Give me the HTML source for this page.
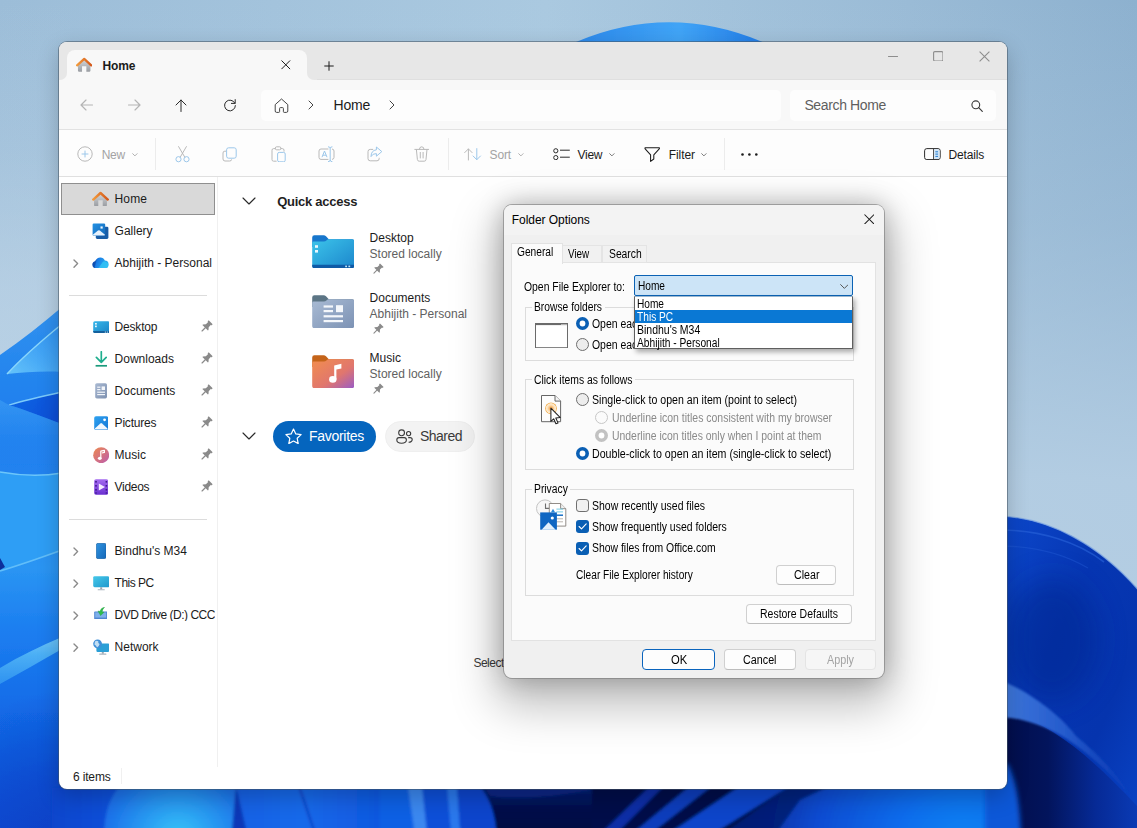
<!DOCTYPE html>
<html lang="en">
<head>
<meta charset="utf-8">
<title>Home - File Explorer</title>
<style>
*{box-sizing:border-box;margin:0;padding:0}
html,body{width:1137px;height:828px;overflow:hidden}
body{position:relative;font-family:"Liberation Sans",sans-serif;font-size:12px;color:#1b1b1b;background:#9dbdd7}
.abs{position:absolute}
#wall{position:absolute;left:0;top:0;width:1137px;height:828px}
.t{position:absolute;white-space:nowrap;line-height:1}
.d{transform:scaleX(.875);transform-origin:0 50%}
</style>
</head>
<body>
<svg id="wall" viewBox="0 0 1137 828">
<defs>
<linearGradient id="sky" x1="0" y1="0" x2="1" y2="0">
<stop offset="0" stop-color="#9cbdd8"/><stop offset="0.48" stop-color="#aac9e0"/><stop offset="0.8" stop-color="#9abbd6"/><stop offset="1" stop-color="#8db1cf"/>
</linearGradient>
<linearGradient id="skyv" x1="0" y1="0" x2="0" y2="1">
<stop offset="0" stop-color="#b6cfe4" stop-opacity="0"/><stop offset="0.27" stop-color="#b6cfe4" stop-opacity="0.3"/><stop offset="0.37" stop-color="#b6cfe4" stop-opacity="0.48"/><stop offset="0.58" stop-color="#b6cfe4" stop-opacity="0.9"/><stop offset="1" stop-color="#b6cfe4" stop-opacity="1"/>
</linearGradient>
<linearGradient id="arc" x1="0" y1="0" x2="1" y2="0">
<stop offset="0" stop-color="#2a86ea"/><stop offset="0.55" stop-color="#40a4f6"/><stop offset="1" stop-color="#1f78e6"/>
</linearGradient>
<linearGradient id="lp" x1="0" y1="0" x2="0" y2="1">
<stop offset="0" stop-color="#3292ef"/><stop offset="0.12" stop-color="#2586ee"/><stop offset="0.25" stop-color="#1d7cee"/><stop offset="0.5" stop-color="#2a95f3"/><stop offset="0.62" stop-color="#1c7ef0"/><stop offset="0.75" stop-color="#146ee9"/><stop offset="1" stop-color="#0a4ad3"/>
</linearGradient>
<radialGradient id="lpd" cx="66" cy="815" r="125" gradientUnits="userSpaceOnUse"><stop offset="0" stop-color="#0a3cc0" stop-opacity=".65"/><stop offset="1" stop-color="#0a3cc0" stop-opacity="0"/></radialGradient>
<linearGradient id="rp" x1="0" y1="0" x2="1" y2="1">
<stop offset="0" stop-color="#0c48cc"/><stop offset="0.4" stop-color="#0636b2"/><stop offset="0.7" stop-color="#0534ae"/><stop offset="1" stop-color="#0a44c6"/>
</linearGradient>
<linearGradient id="rp2" x1="1000" y1="0" x2="1137" y2="0" gradientUnits="userSpaceOnUse">
<stop offset="0" stop-color="#020d4a"/><stop offset="0.35" stop-color="#02145c"/><stop offset="0.7" stop-color="#062a96"/><stop offset="1" stop-color="#0a3ab4"/>
</linearGradient>
<linearGradient id="ba" x1="0" y1="0" x2="1" y2="0"><stop offset="0" stop-color="#0a45cc"/><stop offset="1" stop-color="#0d52dc"/></linearGradient>
<radialGradient id="bb" cx="178" cy="840" r="95" gradientUnits="userSpaceOnUse"><stop offset="0" stop-color="#38c8f7"/><stop offset="0.35" stop-color="#2a9ff3"/><stop offset="0.75" stop-color="#1c74ea"/><stop offset="1" stop-color="#1866e4"/></radialGradient>
<linearGradient id="bd" x1="0" y1="0" x2="1" y2="0"><stop offset="0" stop-color="#1260e4"/><stop offset="0.45" stop-color="#1769ea"/><stop offset="1" stop-color="#0e56de"/></linearGradient>
<linearGradient id="bh" x1="0" y1="0" x2="0" y2="1"><stop offset="0" stop-color="#061f78"/><stop offset="0.4" stop-color="#020f4c"/><stop offset="1" stop-color="#010a3c"/></linearGradient>
<radialGradient id="bj" cx="965" cy="850" r="230" gradientUnits="userSpaceOnUse"><stop offset="0" stop-color="#1486f4"/><stop offset="0.3" stop-color="#0b6cec"/><stop offset="0.65" stop-color="#0a4cd2"/><stop offset="1" stop-color="#042690"/></radialGradient>
<linearGradient id="bk" x1="0" y1="0" x2="1" y2="0"><stop offset="0" stop-color="#021565"/><stop offset="0.5" stop-color="#03207c"/><stop offset="1" stop-color="#0a3cb8"/></linearGradient>
<filter id="soft" x="-2%" y="-20%" width="104%" height="140%"><feGaussianBlur stdDeviation="1.6"/></filter>
<filter id="soft2" x="-10%" y="-10%" width="120%" height="120%"><feGaussianBlur stdDeviation="2.5"/></filter>
<filter id="soft1" x="-10%" y="-10%" width="120%" height="120%"><feGaussianBlur stdDeviation="0.9"/></filter>
<filter id="soft3" x="-50%" y="-50%" width="200%" height="200%"><feGaussianBlur stdDeviation="14"/></filter>
<linearGradient id="band" x1="0" y1="0" x2="1" y2="0"><stop offset="0" stop-color="#4079dc"/><stop offset="0.5" stop-color="#245acc"/><stop offset="1" stop-color="#1546bc" stop-opacity=".3"/></linearGradient>
<linearGradient id="tg1" x1="0" y1="1" x2="1" y2="0"><stop offset="0" stop-color="#66c4fa"/><stop offset="0.45" stop-color="#46a8f6"/><stop offset="1" stop-color="#2c8ff0"/></linearGradient>
<linearGradient id="tg2" x1="0" y1="0" x2="1" y2="0.4"><stop offset="0" stop-color="#1268e6"/><stop offset="1" stop-color="#0a50d8"/></linearGradient>
<linearGradient id="bnd" x1="0" y1="0" x2="0" y2="1"><stop offset="0" stop-color="#6cc4f8"/><stop offset="0.4" stop-color="#4aaef5"/><stop offset="1" stop-color="#2f92f0"/></linearGradient>
<linearGradient id="fade" x1="0" y1="400" x2="0" y2="470" gradientUnits="userSpaceOnUse"><stop offset="0" stop-color="#3a9cf4" stop-opacity=".7"/><stop offset="1" stop-color="#2a8cf0" stop-opacity="0"/></linearGradient>
<filter id="soft0" x="-5%" y="-5%" width="110%" height="110%"><feGaussianBlur stdDeviation="0.5"/></filter>
<linearGradient id="skyl" x1="0" y1="0" x2="0" y2="400" gradientUnits="userSpaceOnUse"><stop offset="0" stop-color="#c0d6e8" stop-opacity="0"/><stop offset="0.37" stop-color="#c0d6e8" stop-opacity=".14"/><stop offset="0.72" stop-color="#c0d6e8" stop-opacity=".55"/><stop offset="1" stop-color="#c0d6e8" stop-opacity=".6"/></linearGradient>
</defs>
<rect width="1137" height="828" fill="url(#sky)"/>
<rect width="1137" height="828" fill="url(#skyv)"/>
<rect width="70" height="400" fill="url(#skyl)"/>
<!-- top arc -->
<path d="M566 50 L576 42 Q669 2.6 762.6 42 L772 50 Z" fill="url(#arc)" filter="url(#soft0)"/>
<!-- left bloom -->
<g filter="url(#soft0)">
<path d="M0 355 C22 340,42 324,62 307 L62 828 L0 828 Z" fill="url(#lp)"/>
<path d="M62 324 C40 342,20 360,7 374 C25 372,45 371,62 372 Z" fill="url(#tg1)"/>
<path d="M62 324 C40 342,20 360,7 374" stroke="#8ad6fc" stroke-width="1.5" fill="none"/>
<path d="M62 392 C44 396,26 400,9 405 C26 410,46 418,62 424 Z" fill="url(#tg2)"/>
<path d="M62 392 C44 396,26 400,9 405" stroke="#7ccafa" stroke-width="1.3" fill="none"/>
<path d="M0 400 C4 402,7 404,9 405 C26 410,46 418,62 424 L62 470 L0 470Z" fill="url(#fade)"/>
<path d="M0 472 C22 476,44 476,62 473 L62 551 C40 558,20 565,0 571 Z" fill="#2e9ef5"/>
<path d="M0 472 C22 476,44 476,62 473" stroke="#6cc6fa" stroke-width="1.5" fill="none"/>
<path d="M0 571 C20 565,40 558,62 550" stroke="#62bef9" stroke-width="1.8" fill="none"/>
<path d="M0 558 L5 567 L0 570 Z" fill="#0a2e9c"/>
<path d="M0 668 C20 656,40 646,62 637 L62 649 C42 660,22 672,0 684 Z" fill="url(#bnd)"/>
<rect x="0" y="660" width="62" height="168" fill="url(#lpd)"/>
</g>
<!-- bottom strip -->
<rect x="59" y="784" width="1078" height="44" fill="#0a44cc"/>
<g filter="url(#soft)">
<rect x="52" y="788" width="70" height="56" fill="url(#ba)"/>
<rect x="230" y="786" width="160" height="56" fill="url(#bd)"/>
<path d="M120 786 C108 800,104 815,104 842 L234 842 L238 786 Z" fill="url(#bb)"/>
<path d="M236 786 L249 842 L231 842 Z" fill="#0a38b8"/>
<path d="M299 786 L318 842" stroke="#0a40c4" stroke-width="2.2"/>
<rect x="380" y="786" width="110" height="56" fill="#1160e4"/>
<path d="M408 786 L416 842 L428 842 L422 786Z" fill="#3a88f0"/>
<path d="M422 786 L428 842 L452 842 L448 786Z" fill="#0d50d8"/>
<path d="M447 786 L452 842 L461 842 L457 786Z" fill="#2a78ec"/>
<path d="M457 786 L461 842 L500 842 L486 786Z" fill="#0a44cc"/>
<path d="M480 786 C490 800,496 812,497 842 L600 842 L660 786 Z" fill="url(#bh)"/>
<path d="M490 796 C520 800,560 796,590 790 L590 786 L484 786Z" fill="#0a2c8c" opacity=".8"/>
<rect x="592" y="786" width="420" height="56" fill="#020f4a"/>
<path d="M592 842 L650 786 L664 786 L608 842 Z" fill="#082fa6"/>
<path d="M622 842 L690 786 L712 786 L640 842 Z" fill="#0a3ebc"/>
<path d="M656 842 L740 786 L790 786 L700 842 Z" fill="#0a44ca"/>
<path d="M712 842 L790 786 L1012 786 L1012 842 Z" fill="url(#bj)"/>
<path d="M770 842 L800 800 L830 786 L790 786 L712 842Z" fill="#03186a" opacity=".75"/>
</g>
<!-- right bloom -->
<path d="M1000 516 C1050 518,1100 545,1140 592 L1140 828 L1000 828 Z" fill="url(#rp)"/>
<path d="M1000 516 C1050 518,1100 545,1140 592" stroke="#7fa8e4" stroke-width="1.2" fill="none" opacity=".8"/>
<path d="M1000 530 C1040 530,1078 542,1104 562" stroke="#2a64da" stroke-width="1.6" fill="none" opacity=".6"/>
<path d="M1000 546 C1034 546,1064 554,1088 568" stroke="#1f58d2" stroke-width="1.4" fill="none" opacity=".5"/>
<ellipse cx="1052" cy="640" rx="46" ry="62" fill="#032690" opacity=".55" filter="url(#soft3)"/>
<path d="M1000 712 C1040 716,1085 750,1137 806 L1137 828 L1000 828 Z" fill="url(#rp2)"/>
<path d="M1000 680 C1030 692,1060 715,1076 736 C1096 752,1116 772,1132 798 C1106 768,1082 748,1062 736 C1040 724,1020 718,1000 717 Z" fill="url(#band)" filter="url(#soft1)"/>
<path d="M985 764 L1008 764 C1014 778,1019 792,1021 834 L985 834 Z" fill="#0c58d8" filter="url(#soft2)"/>
</svg>
<div class="abs" style="left:59px;top:42px;width:948px;height:747px;border-radius:8px;background:#fff;box-shadow:0 0 0 1px rgba(70,85,100,.55),0 8px 22px rgba(0,0,0,.22);overflow:hidden"><div class="abs" style="left:0;top:0;width:948px;height:38px;background:#e7e7e7"></div><div class="abs" style="left:0;top:37px;width:948px;height:1px;background:#dfdfdf"></div><div class="abs" style="left:0;top:30px;width:8px;height:8px;background:#f8f8f8"></div><div class="abs" style="left:0;top:22px;width:8px;height:16px;background:#e7e7e7;border-radius:0 0 7px 0"></div><div class="abs" style="left:248px;top:30px;width:8px;height:8px;background:#f8f8f8"></div><div class="abs" style="left:248px;top:22px;width:10px;height:16px;background:#e7e7e7;border-radius:0 0 0 7px"></div><div class="abs" style="left:8px;top:8px;width:240px;height:32px;background:#f8f8f8;border-radius:8px 8px 0 0"></div><div class="abs" style="left:0;top:38px;width:948px;height:50px;background:#f8f8f8;border-bottom:1px solid #e2e2e2"></div><div class="abs" style="left:0;top:88px;width:948px;height:47px;background:#fdfdfd;border-bottom:1px solid #e0e0e0"></div><div class="abs" style="left:202px;top:47.5px;width:520px;height:31px;background:#fdfdfd;border-radius:5px"></div><div class="abs" style="left:731px;top:47.5px;width:206px;height:31px;background:#fdfdfd;border-radius:5px"></div><div class="abs" style="left:157.5px;top:135px;width:1px;height:590px;background:#f0f0f0"></div></div>
<svg class="abs" style="left:75.8px;top:57.4px;" width="16.4" height="15.4" viewBox="0 0 16 15"><defs><linearGradient id="hg1" x1="0" y1="0" x2="0" y2="1"><stop offset="0" stop-color="#d3d6da"/><stop offset="1" stop-color="#9a9da2"/></linearGradient><linearGradient id="hr1" x1="0" y1="0" x2="1" y2="0"><stop offset="0" stop-color="#f29a3c"/><stop offset="1" stop-color="#d4581a"/></linearGradient></defs><path d="M1.9 7.8 L8 2.4 L14.1 7.8 L14.1 13.5 Q14.1 14.3 13.3 14.3 L10.1 14.3 L10.1 8.9 L5.9 8.9 L5.9 14.3 L2.7 14.3 Q1.9 14.3 1.9 13.5 Z" fill="url(#hg1)"/><path d="M1.1 8.1 L8 1.9 L14.9 8.1" fill="none" stroke="url(#hr1)" stroke-width="2.3" stroke-linecap="round" stroke-linejoin="round"/></svg>
<div class="t" style="left:102.6px;top:60.00px;font-size:12px;font-weight:700;letter-spacing:-0.16px;">Home</div>
<svg class="abs" style="left:281.3px;top:60.3px;" width="9.6" height="9.6" viewBox="0 0 9.6 9.6"><path d="M0.5 0.5 L9.1 9.1 M9.1 0.5 L0.5 9.1" stroke="#1b1b1b" stroke-width="1" fill="none"/></svg>
<svg class="abs" style="left:324.4px;top:60.6px;" width="10" height="10" viewBox="0 0 10 10"><path d="M5 0.3 V9.7 M0.3 5 H9.7" stroke="#1b1b1b" stroke-width="1" fill="none"/></svg>
<svg class="abs" style="left:888px;top:56px;" width="10" height="1.2" viewBox="0 0 10 1.2"><rect width="10" height="1.2" fill="#8e8e8e"/></svg>
<svg class="abs" style="left:932.5px;top:50.8px;" width="10.6" height="10.6" viewBox="0 0 10.6 10.6"><rect x="0.6" y="0.6" width="9.4" height="9.4" rx="1.2" fill="none" stroke="#8e8e8e" stroke-width="1.1"/></svg>
<svg class="abs" style="left:978.5px;top:50.8px;" width="11" height="11" viewBox="0 0 11 11"><path d="M0.6 0.6 L10.4 10.4 M10.4 0.6 L0.6 10.4" stroke="#8e8e8e" stroke-width="1.1" fill="none"/></svg>
<svg class="abs" style="left:79.5px;top:98.5px;" width="13" height="12" viewBox="0 0 13 12"><path d="M12.5 6 H1 M6 1 L1 6 L6 11" stroke="#b4b4b4" stroke-width="1.15" fill="none" stroke-linecap="round" stroke-linejoin="round"/></svg>
<svg class="abs" style="left:127.8px;top:98.5px;" width="13" height="12" viewBox="0 0 13 12"><path d="M0.5 6 H12 M7 1 L12 6 L7 11" stroke="#b4b4b4" stroke-width="1.15" fill="none" stroke-linecap="round" stroke-linejoin="round"/></svg>
<svg class="abs" style="left:175.4px;top:98.8px;" width="12" height="13" viewBox="0 0 12 13"><path d="M6 12.5 V1 M1 6 L6 1 L11 6" stroke="#2a2a2a" stroke-width="1" fill="none" stroke-linecap="round" stroke-linejoin="round"/></svg>
<svg class="abs" style="left:223px;top:98px;" width="14" height="14" viewBox="0 0 14 14"><path d="M11.9 5.2 A5.4 5.4 0 1 0 12.4 7.6" stroke="#2a2a2a" stroke-width="1" fill="none" stroke-linecap="round"/><path d="M12.2 1.6 V5.4 H8.4" stroke="#2a2a2a" stroke-width="1" fill="none" stroke-linecap="round" stroke-linejoin="round"/></svg>
<svg class="abs" style="left:273.5px;top:97.8px;" width="15" height="15.4" viewBox="0 0 15 15.4"><path d="M1.2 6.6 L7.5 1 L13.8 6.6 V13 Q13.8 14.4 12.4 14.4 H10.2 Q9.4 14.4 9.4 13.6 V10.4 Q9.4 9.6 8.6 9.6 H6.4 Q5.6 9.6 5.6 10.4 V13.6 Q5.6 14.4 4.8 14.4 H2.6 Q1.2 14.4 1.2 13 Z" fill="none" stroke="#444" stroke-width="1" stroke-linejoin="round"/></svg>
<svg class="abs" style="left:308px;top:100.2px;" width="6" height="10" viewBox="0 0 6 10"><path d="M1 1 L5 5 L1 9" stroke="#444" stroke-width="1" fill="none" stroke-linecap="round" stroke-linejoin="round"/></svg>
<div class="t" style="left:333.6px;top:98.00px;font-size:14px;letter-spacing:-0.19px;">Home</div>
<svg class="abs" style="left:389px;top:100.2px;" width="6" height="10" viewBox="0 0 6 10"><path d="M1 1 L5 5 L1 9" stroke="#444" stroke-width="1" fill="none" stroke-linecap="round" stroke-linejoin="round"/></svg>
<div class="t" style="left:804.4px;top:98.00px;font-size:14px;color:#5f5f5f;letter-spacing:-0.36px;">Search Home</div>
<svg class="abs" style="left:971px;top:99.5px;" width="12" height="12" viewBox="0 0 12 12"><circle cx="4.8" cy="4.8" r="3.9" fill="none" stroke="#3a3a3a" stroke-width="1.1"/><path d="M7.7 7.7 L11.3 11.3" stroke="#3a3a3a" stroke-width="1.2" stroke-linecap="round"/></svg>
<svg class="abs" style="left:76.5px;top:146px;" width="16" height="16" viewBox="0 0 16 16"><circle cx="8" cy="8" r="7.2" fill="none" stroke="#b9b9b9" stroke-width="1"/><path d="M8 4.6 V11.4 M4.6 8 H11.4" stroke="#9cc7ea" stroke-width="1" fill="none"/></svg>
<div class="t" style="left:101.7px;top:148.70px;font-size:12px;color:#a3a3a3;letter-spacing:-0.24px;">New</div>
<svg class="abs" style="left:132.4px;top:152.6px;" width="5.8" height="3.6" viewBox="0 0 5.8 3.6"><path d="M0.7 0.7 L2.9 2.9 L5.1 0.7" stroke="#b0b0b0" stroke-width="1" fill="none" stroke-linecap="round" stroke-linejoin="round"/></svg>
<div class="abs" style="left:155px;top:138px;width:1px;height:32px;background:#ececec"></div>
<svg class="abs" style="left:174.5px;top:146px;" width="15" height="16.5" viewBox="0 0 15 16.5"><path d="M3.6 0.6 L9.8 11.2 M11.4 0.6 L5.2 11.2" stroke="#b9b9b9" stroke-width="1" fill="none" stroke-linecap="round"/><circle cx="3.5" cy="13.2" r="2.6" fill="none" stroke="#9cc7ea" stroke-width="1"/><circle cx="11.5" cy="13.2" r="2.6" fill="none" stroke="#9cc7ea" stroke-width="1"/></svg>
<svg class="abs" style="left:222.2px;top:146.5px;" width="15" height="15" viewBox="0 0 15 15"><path d="M4 4.2 H2.8 Q1 4.2 1 6 V12 Q1 14 3 14 H7.6 Q9.6 14 9.6 12.4" fill="none" stroke="#b9b9b9" stroke-width="1"/><rect x="4.6" y="0.8" width="9.6" height="10.4" rx="2" fill="none" stroke="#9cc7ea" stroke-width="1"/></svg>
<svg class="abs" style="left:270.5px;top:145.8px;" width="15" height="16.5" viewBox="0 0 15 16.5"><path d="M4.6 2.6 H2.6 Q1 2.6 1 4.2 V13.6 Q1 15.2 2.6 15.2 H5.6 M9.6 2.6 H11.4 Q13 2.6 13 4.2 V5.6" fill="none" stroke="#b9b9b9" stroke-width="1"/><rect x="4.4" y="0.8" width="5.4" height="3" rx="1.2" fill="none" stroke="#b9b9b9" stroke-width="1"/><rect x="6.6" y="6.4" width="7.6" height="9.4" rx="1.6" fill="none" stroke="#9cc7ea" stroke-width="1"/></svg>
<svg class="abs" style="left:317.8px;top:145.8px;" width="17" height="16.5" viewBox="0 0 17 16.5"><path d="M10.4 3 H3 Q1 3 1 5 V11.4 Q1 13.4 3 13.4 H10.4 M14 3 Q16 3.2 16 5 V11.4 Q16 13.2 14 13.4" fill="none" stroke="#b9b9b9" stroke-width="1"/><path d="M10 0.8 Q12.2 0.8 12.2 2.4 V14 Q12.2 15.7 10 15.7 M14.4 0.8 Q12.2 0.8 12.2 2.4 M14.4 15.7 Q12.2 15.7 12.2 14" fill="none" stroke="#9cc7ea" stroke-width="1"/><path d="M4 11.2 L6.5 5 L9 11.2 M4.9 9.2 H8.1" fill="none" stroke="#9cc7ea" stroke-width="1" stroke-linejoin="round"/></svg>
<svg class="abs" style="left:366.6px;top:146px;" width="16" height="16" viewBox="0 0 16 16"><path d="M6.2 3.4 H3.2 Q1 3.4 1 5.6 V12.6 Q1 14.8 3.2 14.8 H10 Q12.2 14.8 12.2 12.6 V11.8" fill="none" stroke="#b9b9b9" stroke-width="1"/><path d="M9.4 1 L14.8 5.6 L9.4 10.2 V7.6 Q5.6 7.4 4 10.6 Q4.2 4.4 9.4 3.8 Z" fill="none" stroke="#9cc7ea" stroke-width="1" stroke-linejoin="round"/></svg>
<svg class="abs" style="left:414.3px;top:146px;" width="15.4" height="16" viewBox="0 0 15.4 16"><path d="M0.8 3.4 H14.6 M5.4 3.2 Q5.4 0.8 7.7 0.8 Q10 0.8 10 3.2 M2.4 3.6 L3.4 13.6 Q3.6 15.2 5.2 15.2 H10.2 Q11.8 15.2 12 13.6 L13 3.6 M6.3 6.4 V12 M9.1 6.4 V12" fill="none" stroke="#b9b9b9" stroke-width="1" stroke-linecap="round"/></svg>
<div class="abs" style="left:448px;top:138px;width:1px;height:32px;background:#ececec"></div>
<svg class="abs" style="left:464.2px;top:148px;" width="17.4" height="12.6" viewBox="0 0 17.4 12.6"><path d="M4.4 12 V1 M0.7 4.6 L4.4 0.9 L8.1 4.6" fill="none" stroke="#b9b9b9" stroke-width="1" stroke-linecap="round" stroke-linejoin="round"/><path d="M12.8 0.6 V11.6 M9.1 8 L12.8 11.7 L16.5 8" fill="none" stroke="#9cc7ea" stroke-width="1" stroke-linecap="round" stroke-linejoin="round"/></svg>
<div class="t" style="left:489.6px;top:148.70px;font-size:12px;color:#a3a3a3;letter-spacing:-0.18px;">Sort</div>
<svg class="abs" style="left:518.3px;top:152.6px;" width="5.8" height="3.6" viewBox="0 0 5.8 3.6"><path d="M0.7 0.7 L2.9 2.9 L5.1 0.7" stroke="#b0b0b0" stroke-width="1" fill="none" stroke-linecap="round" stroke-linejoin="round"/></svg>
<svg class="abs" style="left:552.8px;top:147.6px;" width="17" height="12.4" viewBox="0 0 17 12.4"><circle cx="2.8" cy="2.8" r="2.1" fill="none" stroke="#2a2a2a" stroke-width="1"/><circle cx="2.8" cy="9.6" r="2.1" fill="none" stroke="#2a2a2a" stroke-width="1"/><path d="M7.4 2.2 H16.4 M7.4 9.2 H16.4" stroke="#2a2a2a" stroke-width="1" stroke-linecap="round"/></svg>
<div class="t" style="left:577.6px;top:148.70px;font-size:12px;letter-spacing:-0.3px;">View</div>
<svg class="abs" style="left:609.2px;top:152.6px;" width="5.8" height="3.6" viewBox="0 0 5.8 3.6"><path d="M0.7 0.7 L2.9 2.9 L5.1 0.7" stroke="#7a7a7a" stroke-width="1" fill="none" stroke-linecap="round" stroke-linejoin="round"/></svg>
<svg class="abs" style="left:643.8px;top:146.8px;" width="16.4" height="15.4" viewBox="0 0 16.4 15.4"><path d="M1 0.8 H15.4 Q15.6 1.6 15 2.2 L9.8 7.8 V12 L6.6 14.4 V7.8 L1.4 2.2 Q0.8 1.6 1 0.8 Z" fill="none" stroke="#1b1b1b" stroke-width="1.05" stroke-linejoin="round"/></svg>
<div class="t" style="left:668.7px;top:148.70px;font-size:12px;letter-spacing:-0.06px;">Filter</div>
<svg class="abs" style="left:701.2px;top:152.6px;" width="5.8" height="3.6" viewBox="0 0 5.8 3.6"><path d="M0.7 0.7 L2.9 2.9 L5.1 0.7" stroke="#7a7a7a" stroke-width="1" fill="none" stroke-linecap="round" stroke-linejoin="round"/></svg>
<div class="abs" style="left:724px;top:138px;width:1px;height:32px;background:#ececec"></div>
<svg class="abs" style="left:740.6px;top:153.2px;" width="17" height="3" viewBox="0 0 17 3"><circle cx="1.5" cy="1.5" r="1.3" fill="#1b1b1b"/><circle cx="8.4" cy="1.5" r="1.3" fill="#1b1b1b"/><circle cx="15.3" cy="1.5" r="1.3" fill="#1b1b1b"/></svg>
<svg class="abs" style="left:923.6px;top:148px;" width="17" height="12.4" viewBox="0 0 17 12.4"><rect x="0.6" y="0.6" width="15.6" height="11" rx="2.2" fill="none" stroke="#2a2a2a" stroke-width="1"/><path d="M9.6 0.8 V11.4" stroke="#2a2a2a" stroke-width="0.9"/><path d="M10.2 1.2 H14 Q15.6 1.2 15.6 2.8 V9.4 Q15.6 11 14 11 H10.2 Z" fill="#cfe4f7"/><path d="M11.4 3.8 H14 M11.4 6.1 H14 M11.4 8.4 H14" stroke="#1f7bd0" stroke-width="1"/></svg>
<div class="t" style="left:948.6px;top:148.90px;font-size:12px;letter-spacing:-0.17px;">Details</div>
<div class="abs" style="left:61px;top:183px;width:154px;height:32px;background:#d9d9d9;border:1px solid #8f8f8f"></div>
<svg class="abs" style="left:92.4px;top:191.3px;" width="17" height="15.8" viewBox="0 0 16 15"><defs><linearGradient id="hg2" x1="0" y1="0" x2="0" y2="1"><stop offset="0" stop-color="#d3d6da"/><stop offset="1" stop-color="#9a9da2"/></linearGradient><linearGradient id="hr2" x1="0" y1="0" x2="1" y2="0"><stop offset="0" stop-color="#f29a3c"/><stop offset="1" stop-color="#d4581a"/></linearGradient></defs><path d="M1.9 7.8 L8 2.4 L14.1 7.8 L14.1 13.5 Q14.1 14.3 13.3 14.3 L10.1 14.3 L10.1 8.9 L5.9 8.9 L5.9 14.3 L2.7 14.3 Q1.9 14.3 1.9 13.5 Z" fill="url(#hg2)"/><path d="M1.1 8.1 L8 1.9 L14.9 8.1" fill="none" stroke="url(#hr2)" stroke-width="2.3" stroke-linecap="round" stroke-linejoin="round"/></svg>
<div class="t" style="left:114.6px;top:192.50px;font-size:12px;letter-spacing:0.1px;">Home</div>
<svg class="abs" style="left:92.4px;top:222.6px;" width="17" height="16.4" viewBox="0 0 17 16.4"><defs><linearGradient id="gal" x1="0" y1="0" x2="1" y2="1"><stop offset="0" stop-color="#2492e4"/><stop offset="1" stop-color="#1468b8"/></linearGradient></defs><path d="M3.8 3.7 H15 Q16.4 3.7 16.4 5.1 V14.6 Q16.4 16 15 16 H5.2 Q3.8 16 3.8 14.6 Z" fill="#185ca6"/><rect x="0.6" y="0.5" width="12.6" height="12.3" rx="1.2" fill="url(#gal)"/><path d="M0.8 11.8 L6 7.6 Q6.9 6.9 7.8 7.6 L13 11.8 Q13 12.6 12.2 12.6 H1.6 Q0.8 12.6 0.8 11.8 Z" fill="#e6f1fc"/><rect x="8.5" y="3.4" width="2.2" height="2.2" fill="#eef6fd"/></svg>
<div class="t" style="left:114.6px;top:224.50px;font-size:12px;">Gallery</div>
<svg class="abs" style="left:92.4px;top:256.8px;" width="17" height="11.6" viewBox="0 0 17 11.6"><defs><linearGradient id="od1" x1="0" y1="0" x2="1" y2="0.3"><stop offset="0" stop-color="#0d46ae"/><stop offset="0.4" stop-color="#1a7ee6"/><stop offset="1" stop-color="#2ab2f0"/></linearGradient></defs><path d="M4.2 11.2 Q0.4 11.2 0.4 7.8 Q0.4 4.8 3.2 4.2 Q4.6 0.4 8.4 0.4 Q11.6 0.4 12.8 3.4 Q16.6 3.6 16.6 7.4 Q16.6 11.2 13 11.2 Z" fill="url(#od1)"/><path d="M6.4 11.2 L10.4 5.4 Q12 3.6 13.6 4.8 L16 6.6 Q17.2 11.2 13 11.2Z" fill="#32c2f5" opacity=".85"/><path d="M0.4 7.8 Q0.4 4.8 3.2 4.2 Q3.6 3 4.4 2.2 L3 9.4 Q2.4 11 4.2 11.2 Q0.4 11.2 0.4 7.8Z" fill="#0a3896" opacity=".55"/></svg>
<div class="t" style="left:114.6px;top:256.50px;font-size:12px;">Abhijith - Personal</div>
<svg class="abs" style="left:72.6px;top:258.6px;" width="6" height="9.4" viewBox="0 0 6 9.4"><path d="M1 1 L4.6 4.6 L1 8.2" stroke="#8a8a8a" stroke-width="1.35" fill="none" stroke-linecap="round" stroke-linejoin="round"/></svg>
<div class="abs" style="left:69px;top:295px;width:138px;height:1px;background:#dcdcdc"></div>
<svg class="abs" style="left:92.6px;top:321px;" width="16.6" height="12.2" viewBox="0 0 16.6 12.2"><defs><linearGradient id="dsk" x1="0" y1="0" x2="1" y2="1"><stop offset="0" stop-color="#38b7ea"/><stop offset="1" stop-color="#1b84c6"/></linearGradient></defs><rect x="0.2" y="0.2" width="16.2" height="11.8" rx="1.6" fill="url(#dsk)"/><path d="M0.2 10 H16.4 V10.6 Q16.4 12 15 12 H1.6 Q0.2 12 0.2 10.6 Z" fill="#15609c"/><rect x="2" y="2" width="1.8" height="1.6" fill="#e8f6fd"/><rect x="2" y="4.6" width="1.8" height="1.6" fill="#e8f6fd"/><rect x="11.8" y="10.6" width="1.2" height="1" fill="#bfe4f6"/><rect x="13.8" y="10.6" width="1.2" height="1" fill="#bfe4f6"/></svg>
<div class="t" style="left:114.6px;top:320.50px;font-size:12px;letter-spacing:-0.2px;">Desktop</div>
<svg class="abs" style="left:200.6px;top:321.2px;overflow:visible;" width="11" height="11" viewBox="0 0 11 11"><g transform="rotate(45 5.5 5.5)"><path d="M2.7 -0.4 H8.3 V1.2 H7.5 L7.5 4.4 L9.4 6.6 V7.4 H1.6 V6.6 L3.5 4.4 L3.5 1.2 H2.7 Z" fill="#8a8a8a"/><path d="M5.5 7.2 V11.8" stroke="#8a8a8a" stroke-width="1.2" stroke-linecap="round"/></g></svg>
<svg class="abs" style="left:94.8px;top:351px;" width="12.6" height="16" viewBox="0 0 12.6 16"><path d="M6.3 0.8 V11 M1.4 6.4 L6.3 11.3 L11.2 6.4" fill="none" stroke="#1fae8e" stroke-width="1.7" stroke-linecap="round" stroke-linejoin="round"/><path d="M0.6 14.8 H12" stroke="#1a9a7c" stroke-width="1.7"/></svg>
<div class="t" style="left:114.6px;top:352.50px;font-size:12px;">Downloads</div>
<svg class="abs" style="left:200.6px;top:353.2px;overflow:visible;" width="11" height="11" viewBox="0 0 11 11"><g transform="rotate(45 5.5 5.5)"><path d="M2.7 -0.4 H8.3 V1.2 H7.5 L7.5 4.4 L9.4 6.6 V7.4 H1.6 V6.6 L3.5 4.4 L3.5 1.2 H2.7 Z" fill="#8a8a8a"/><path d="M5.5 7.2 V11.8" stroke="#8a8a8a" stroke-width="1.2" stroke-linecap="round"/></g></svg>
<svg class="abs" style="left:95px;top:383.4px;" width="12.2" height="15.6" viewBox="0 0 12.2 15.6"><defs><linearGradient id="doc" x1="0" y1="0" x2="1" y2="1"><stop offset="0" stop-color="#a9b9d2"/><stop offset="1" stop-color="#7d90b0"/></linearGradient></defs><rect x="0.2" y="0.2" width="11.8" height="15.2" rx="1.6" fill="url(#doc)"/><rect x="2.2" y="3.6" width="3.2" height="1.2" fill="#f3f6fa"/><rect x="2.2" y="6" width="3.2" height="1.2" fill="#f3f6fa"/><rect x="6.6" y="3.4" width="3.4" height="3.6" fill="#f3f6fa"/><rect x="2.2" y="8.6" width="7.8" height="1.2" fill="#f3f6fa"/><rect x="2.2" y="11" width="7.8" height="1.2" fill="#f3f6fa"/></svg>
<div class="t" style="left:114.6px;top:384.50px;font-size:12px;">Documents</div>
<svg class="abs" style="left:200.6px;top:385.2px;overflow:visible;" width="11" height="11" viewBox="0 0 11 11"><g transform="rotate(45 5.5 5.5)"><path d="M2.7 -0.4 H8.3 V1.2 H7.5 L7.5 4.4 L9.4 6.6 V7.4 H1.6 V6.6 L3.5 4.4 L3.5 1.2 H2.7 Z" fill="#8a8a8a"/><path d="M5.5 7.2 V11.8" stroke="#8a8a8a" stroke-width="1.2" stroke-linecap="round"/></g></svg>
<svg class="abs" style="left:94px;top:416px;" width="14.4" height="14.2" viewBox="0 0 14.4 14.2"><defs><linearGradient id="pic" x1="0" y1="0" x2="1" y2="1"><stop offset="0" stop-color="#2ea2f0"/><stop offset="1" stop-color="#1577d6"/></linearGradient></defs><rect x="0.2" y="0.2" width="14" height="13.8" rx="1.8" fill="url(#pic)"/><path d="M0.8 12.6 L6.4 7.4 Q7.2 6.8 8 7.4 L13.6 12.6 Q13.4 13.6 12.4 13.6 H2 Q1 13.6 0.8 12.6Z" fill="#f2f8fe"/><circle cx="10.6" cy="3.8" r="1.4" fill="#fff"/></svg>
<div class="t" style="left:114.6px;top:416.50px;font-size:12px;letter-spacing:-0.2px;">Pictures</div>
<svg class="abs" style="left:200.6px;top:417.2px;overflow:visible;" width="11" height="11" viewBox="0 0 11 11"><g transform="rotate(45 5.5 5.5)"><path d="M2.7 -0.4 H8.3 V1.2 H7.5 L7.5 4.4 L9.4 6.6 V7.4 H1.6 V6.6 L3.5 4.4 L3.5 1.2 H2.7 Z" fill="#8a8a8a"/><path d="M5.5 7.2 V11.8" stroke="#8a8a8a" stroke-width="1.2" stroke-linecap="round"/></g></svg>
<svg class="abs" style="left:92.8px;top:446.8px;" width="16.4" height="16.4" viewBox="0 0 16.4 16.4"><defs><linearGradient id="mus" x1="0" y1="0" x2="1" y2="1"><stop offset="0" stop-color="#ee8a4e"/><stop offset="1" stop-color="#bc5cae"/></linearGradient></defs><circle cx="8.2" cy="8.2" r="8" fill="url(#mus)"/><path d="M7.8 11.2 V4.2 L11.4 3.4 V5.4 L8.9 6" fill="none" stroke="#fff" stroke-width="1.2" stroke-linejoin="round"/><ellipse cx="6.8" cy="11.3" rx="1.9" ry="1.6" fill="#fff"/></svg>
<div class="t" style="left:114.6px;top:448.50px;font-size:12px;">Music</div>
<svg class="abs" style="left:200.6px;top:449.2px;overflow:visible;" width="11" height="11" viewBox="0 0 11 11"><g transform="rotate(45 5.5 5.5)"><path d="M2.7 -0.4 H8.3 V1.2 H7.5 L7.5 4.4 L9.4 6.6 V7.4 H1.6 V6.6 L3.5 4.4 L3.5 1.2 H2.7 Z" fill="#8a8a8a"/><path d="M5.5 7.2 V11.8" stroke="#8a8a8a" stroke-width="1.2" stroke-linecap="round"/></g></svg>
<svg class="abs" style="left:94px;top:479.2px;" width="14.4" height="16" viewBox="0 0 14.4 16"><defs><linearGradient id="vid" x1="0" y1="0" x2="0" y2="1"><stop offset="0" stop-color="#a56cf0"/><stop offset="1" stop-color="#6a2fd0"/></linearGradient></defs><rect x="0.2" y="0.2" width="14" height="15.6" rx="1.8" fill="url(#vid)"/><path d="M4.8 4.4 L11 8 L4.8 11.6 Z" fill="#f4ecff"/><g fill="#3d1a8c"><rect x="1.2" y="2" width="1.6" height="1.6"/><rect x="1.2" y="6" width="1.6" height="1.6"/><rect x="1.2" y="10" width="1.6" height="1.6"/><rect x="1.2" y="13.4" width="1.6" height="1.2"/><rect x="11.6" y="2" width="1.6" height="1.6"/><rect x="11.6" y="6" width="1.6" height="1.6"/><rect x="11.6" y="10" width="1.6" height="1.6"/><rect x="11.6" y="13.4" width="1.6" height="1.2"/></g></svg>
<div class="t" style="left:114.6px;top:480.50px;font-size:12px;letter-spacing:-0.3px;">Videos</div>
<svg class="abs" style="left:200.6px;top:481.2px;overflow:visible;" width="11" height="11" viewBox="0 0 11 11"><g transform="rotate(45 5.5 5.5)"><path d="M2.7 -0.4 H8.3 V1.2 H7.5 L7.5 4.4 L9.4 6.6 V7.4 H1.6 V6.6 L3.5 4.4 L3.5 1.2 H2.7 Z" fill="#8a8a8a"/><path d="M5.5 7.2 V11.8" stroke="#8a8a8a" stroke-width="1.2" stroke-linecap="round"/></g></svg>
<div class="abs" style="left:69px;top:519px;width:138px;height:1px;background:#dcdcdc"></div>
<svg class="abs" style="left:72.6px;top:546.6px;" width="6" height="9.4" viewBox="0 0 6 9.4"><path d="M1 1 L4.6 4.6 L1 8.2" stroke="#8a8a8a" stroke-width="1.35" fill="none" stroke-linecap="round" stroke-linejoin="round"/></svg>
<svg class="abs" style="left:95.8px;top:543px;" width="10.4" height="16" viewBox="0 0 10.4 16"><defs><linearGradient id="ph" x1="0" y1="0" x2="1" y2="1"><stop offset="0" stop-color="#2f93e0"/><stop offset="1" stop-color="#1668b8"/></linearGradient></defs><rect x="0.3" y="0.3" width="9.8" height="15.4" rx="1.8" fill="url(#ph)" stroke="#135a9e" stroke-width="0.6"/></svg>
<div class="t" style="left:114.6px;top:544.50px;font-size:12px;">Bindhu's M34</div>
<svg class="abs" style="left:72.6px;top:578.6px;" width="6" height="9.4" viewBox="0 0 6 9.4"><path d="M1 1 L4.6 4.6 L1 8.2" stroke="#8a8a8a" stroke-width="1.35" fill="none" stroke-linecap="round" stroke-linejoin="round"/></svg>
<svg class="abs" style="left:92.8px;top:575.8px;" width="16.4" height="15" viewBox="0 0 16.4 15"><defs><linearGradient id="pc" x1="0" y1="0" x2="1" y2="1"><stop offset="0" stop-color="#45c8ea"/><stop offset="1" stop-color="#1f98cc"/></linearGradient></defs><rect x="0.2" y="0.2" width="16" height="11" rx="1.4" fill="url(#pc)"/><rect x="7.2" y="11.2" width="2" height="2.2" fill="#9aa7b2"/><rect x="4.6" y="13.2" width="7.2" height="1.1" rx="0.5" fill="#a9b4be"/></svg>
<div class="t" style="left:114.6px;top:576.50px;font-size:12px;letter-spacing:-0.5px;">This PC</div>
<svg class="abs" style="left:72.6px;top:610.6px;" width="6" height="9.4" viewBox="0 0 6 9.4"><path d="M1 1 L4.6 4.6 L1 8.2" stroke="#8a8a8a" stroke-width="1.35" fill="none" stroke-linecap="round" stroke-linejoin="round"/></svg>
<svg class="abs" style="left:94px;top:606.6px;" width="13.4" height="12.6" viewBox="0 0 13.4 12.6"><rect x="0.2" y="4.4" width="13" height="8" rx="0.8" fill="#4f86d2"/><rect x="1.2" y="5.4" width="11" height="5.2" fill="#7fb0ea"/><path d="M10.6 0.2 Q6.6 1 6 4.4 L4 4 L6.6 8.6 L10 5.2 L8 4.8 Q8.4 2.2 10.6 0.2Z" fill="#2fbf4c" stroke="#1f9a3a" stroke-width="0.4"/></svg>
<div class="t" style="left:114.6px;top:608.50px;font-size:12px;letter-spacing:-0.5px;width:100.8px;overflow:hidden;">DVD Drive (D:) CCC</div>
<svg class="abs" style="left:72.6px;top:642.6px;" width="6" height="9.4" viewBox="0 0 6 9.4"><path d="M1 1 L4.6 4.6 L1 8.2" stroke="#8a8a8a" stroke-width="1.35" fill="none" stroke-linecap="round" stroke-linejoin="round"/></svg>
<svg class="abs" style="left:92.8px;top:638.8px;" width="16.4" height="16.2" viewBox="0 0 16.4 16.2"><rect x="3.4" y="4.4" width="12.8" height="8.6" rx="1.2" fill="#2a9fd6"/><rect x="8.8" y="13" width="2" height="1.8" fill="#9aa7b2"/><rect x="6.2" y="14.6" width="7.2" height="1.1" rx="0.5" fill="#a9b4be"/><circle cx="4.6" cy="4.8" r="4.4" fill="#3f8fd8"/><path d="M2 2.4 Q4 1.2 5.4 2.6 Q4.6 4.4 6.6 5 Q6 7.6 4 8.6 Q3.4 6.4 1.4 5.6 Z" fill="#d8ecf8" opacity=".85"/></svg>
<div class="t" style="left:114.6px;top:640.50px;font-size:12px;">Network</div>
<div class="t" style="left:73px;top:770.50px;font-size:12px;letter-spacing:-0.16px;">6 items</div>
<div class="abs" style="left:121px;top:768px;width:1px;height:16px;background:#f0f0f0"></div>
<svg class="abs" style="left:242px;top:197.4px;" width="14" height="8" viewBox="0 0 14 8"><path d="M1 1 L7 7 L13 1" stroke="#2a2a2a" stroke-width="1.15" fill="none" stroke-linecap="round" stroke-linejoin="round"/></svg>
<div class="t" style="left:277.2px;top:195.10px;font-size:13px;color:#1f1f1f;font-weight:700;letter-spacing:-0.26px;">Quick access</div>
<svg class="abs" style="left:311.8px;top:234.6px;" width="42.4" height="33.4" viewBox="0 0 42.4 33.4"><defs><linearGradient id="fdk" x1="0" y1="0" x2="1" y2="1"><stop offset="0" stop-color="#3cc4ea"/><stop offset="1" stop-color="#1c86cc"/></linearGradient></defs><path d="M0.2 2.4 Q0.2 0.2 2.4 0.2 H11.6 Q13 0.2 14 1.2 L16.8 4.2 H40 Q42.2 4.2 42.2 6.4 V12 H0.2 Z" fill="#1776cc"/><path d="M0.2 8 Q0.2 6.6 1.6 6.6 H12 Q13.4 6.6 14.4 5.6 L15.6 4.6 Q16.2 4.2 17 4.2 H40 Q42.2 4.2 42.2 6.4 V31 Q42.2 33.2 40 33.2 H2.4 Q0.2 33.2 0.2 31 Z" fill="url(#fdk)"/><path d="M0.2 29.8 H42.2 V31 Q42.2 33.2 40 33.2 H2.4 Q0.2 33.2 0.2 31 Z" fill="#0f5aa6"/><rect x="3" y="10.2" width="3" height="2.6" fill="#eaf8fe"/><rect x="3" y="15" width="3" height="2.6" fill="#eaf8fe"/><rect x="33.2" y="30.6" width="1.8" height="1.6" fill="#bfe6f8"/><rect x="36.4" y="30.6" width="1.8" height="1.6" fill="#bfe6f8"/></svg>
<svg class="abs" style="left:311.8px;top:294.6px;" width="42.4" height="33.4" viewBox="0 0 42.4 33.4"><defs><linearGradient id="fdc" x1="0" y1="0" x2="1" y2="1"><stop offset="0" stop-color="#a9bbd4"/><stop offset="1" stop-color="#7c92b4"/></linearGradient></defs><path d="M0.2 2.4 Q0.2 0.2 2.4 0.2 H11.6 Q13 0.2 14 1.2 L16.8 4.2 H40 Q42.2 4.2 42.2 6.4 V12 H0.2 Z" fill="#5c7585"/><path d="M0.2 8 Q0.2 6.6 1.6 6.6 H12 Q13.4 6.6 14.4 5.6 L15.6 4.6 Q16.2 4.2 17 4.2 H40 Q42.2 4.2 42.2 6.4 V31 Q42.2 33.2 40 33.2 H2.4 Q0.2 33.2 0.2 31 Z" fill="url(#fdc)"/><g fill="#f4f7fb"><rect x="11.6" y="10.4" width="9.4" height="2.2"/><rect x="11.6" y="15" width="9.4" height="2.2"/><rect x="24" y="10.2" width="7" height="7"/><rect x="11.6" y="20.2" width="19.4" height="2.2"/><rect x="11.6" y="25" width="19.4" height="2.2"/></g></svg>
<svg class="abs" style="left:311.8px;top:354.6px;" width="42.4" height="33.4" viewBox="0 0 42.4 33.4"><defs><linearGradient id="fmu" x1="0" y1="0" x2="1" y2="1"><stop offset="0" stop-color="#f28e4e"/><stop offset="0.6" stop-color="#e0766e"/><stop offset="1" stop-color="#9a5cc6"/></linearGradient></defs><path d="M0.2 2.4 Q0.2 0.2 2.4 0.2 H11.6 Q13 0.2 14 1.2 L16.8 4.2 H40 Q42.2 4.2 42.2 6.4 V12 H0.2 Z" fill="#c4641a"/><path d="M0.2 8 Q0.2 6.6 1.6 6.6 H12 Q13.4 6.6 14.4 5.6 L15.6 4.6 Q16.2 4.2 17 4.2 H40 Q42.2 4.2 42.2 6.4 V31 Q42.2 33.2 40 33.2 H2.4 Q0.2 33.2 0.2 31 Z" fill="url(#fmu)"/><path d="M22.2 24.4 V10.6 L29.4 8.8 V13.4 L24.4 14.6 V24.4" fill="#fff"/><ellipse cx="20.8" cy="24.4" rx="3.7" ry="3.3" fill="#fff"/></svg>
<div class="t" style="left:369.6px;top:232.20px;font-size:12px;">Desktop</div>
<div class="t" style="left:369.6px;top:248.20px;font-size:12px;color:#616161;">Stored locally</div>
<svg class="abs" style="left:373px;top:264.2px;overflow:visible;" width="10" height="10" viewBox="0 0 11 11"><g transform="rotate(45 5.5 5.5)"><path d="M2.7 -0.4 H8.3 V1.2 H7.5 L7.5 4.4 L9.4 6.6 V7.4 H1.6 V6.6 L3.5 4.4 L3.5 1.2 H2.7 Z" fill="#8a8a8a"/><path d="M5.5 7.2 V11.8" stroke="#8a8a8a" stroke-width="1.2" stroke-linecap="round"/></g></svg>
<div class="t" style="left:369.6px;top:292.20px;font-size:12px;">Documents</div>
<div class="t" style="left:369.6px;top:308.20px;font-size:12px;color:#616161;">Abhijith - Personal</div>
<svg class="abs" style="left:373px;top:324.2px;overflow:visible;" width="10" height="10" viewBox="0 0 11 11"><g transform="rotate(45 5.5 5.5)"><path d="M2.7 -0.4 H8.3 V1.2 H7.5 L7.5 4.4 L9.4 6.6 V7.4 H1.6 V6.6 L3.5 4.4 L3.5 1.2 H2.7 Z" fill="#8a8a8a"/><path d="M5.5 7.2 V11.8" stroke="#8a8a8a" stroke-width="1.2" stroke-linecap="round"/></g></svg>
<div class="t" style="left:369.6px;top:352.20px;font-size:12px;">Music</div>
<div class="t" style="left:369.6px;top:368.20px;font-size:12px;color:#616161;">Stored locally</div>
<svg class="abs" style="left:373px;top:384.2px;overflow:visible;" width="10" height="10" viewBox="0 0 11 11"><g transform="rotate(45 5.5 5.5)"><path d="M2.7 -0.4 H8.3 V1.2 H7.5 L7.5 4.4 L9.4 6.6 V7.4 H1.6 V6.6 L3.5 4.4 L3.5 1.2 H2.7 Z" fill="#8a8a8a"/><path d="M5.5 7.2 V11.8" stroke="#8a8a8a" stroke-width="1.2" stroke-linecap="round"/></g></svg>
<svg class="abs" style="left:242px;top:432.4px;" width="14" height="8" viewBox="0 0 14 8"><path d="M1 1 L7 7 L13 1" stroke="#2a2a2a" stroke-width="1.15" fill="none" stroke-linecap="round" stroke-linejoin="round"/></svg>
<div class="abs" style="left:273px;top:421px;width:103px;height:31px;border-radius:15.5px;background:#0565be"></div>
<svg class="abs" style="left:284.6px;top:427.6px;" width="17" height="16.4" viewBox="0 0 17 16.4"><path d="M8.5 1 L10.8 5.9 L16.1 6.6 L12.2 10.3 L13.2 15.6 L8.5 13 L3.8 15.6 L4.8 10.3 L0.9 6.6 L6.2 5.9 Z" fill="none" stroke="#fff" stroke-width="1.2" stroke-linejoin="round"/></svg>
<div class="t" style="left:309px;top:429.40px;font-size:14px;color:#fff;letter-spacing:-0.29px;">Favorites</div>
<div class="abs" style="left:385px;top:421px;width:90px;height:31px;border-radius:15.5px;background:#f3f3f3;border:1px solid #efefef"></div>
<svg class="abs" style="left:396px;top:428.6px;" width="17" height="15" viewBox="0 0 17 15"><circle cx="5.6" cy="3.8" r="2.9" fill="none" stroke="#3a3a3a" stroke-width="1.1"/><path d="M0.8 11 Q0.8 8.6 3 8.6 H8.2 Q10.4 8.6 10.4 11 Q10.2 14.2 5.6 14.2 Q1 14.2 0.8 11Z" fill="none" stroke="#3a3a3a" stroke-width="1.1"/><circle cx="12.6" cy="4.6" r="2.1" fill="none" stroke="#3a3a3a" stroke-width="1.1"/><path d="M12.2 8.6 H14 Q16.2 8.6 16.2 10.6 Q16 13.2 12.6 13.2" fill="none" stroke="#3a3a3a" stroke-width="1.1"/></svg>
<div class="t" style="left:420px;top:429.40px;font-size:14px;color:#3a3a3a;letter-spacing:-0.53px;">Shared</div>
<div class="t" style="left:473.4px;top:657.40px;font-size:12px;color:#3a3a3a;letter-spacing:-0.5px;">Select a single file to get more information and share your cloud content.</div>
<div class="abs" style="left:504px;top:205px;width:380px;height:473px;border-radius:8px;background:#f0f0f0;box-shadow:0 0 0 1px rgba(125,125,125,.62),0 20px 46px 8px rgba(0,0,0,.26),0 0 26px rgba(0,0,0,.25)"></div>
<div class="abs" style="left:504px;top:205px;width:380px;height:30px;border-radius:8px 8px 0 0;background:#f3f3f3"></div>
<div class="t" style="left:511.8px;top:213.50px;font-size:12px;color:#000;letter-spacing:-0.05px;">Folder Options</div>
<svg class="abs" style="left:863.9px;top:213.8px;" width="10.6" height="10.6" viewBox="0 0 10.6 10.6"><path d="M0.5 0.5 L10.1 10.1 M10.1 0.5 L0.5 10.1" stroke="#1b1b1b" stroke-width="1.05" fill="none"/></svg>
<div class="abs" style="left:510.5px;top:262px;width:365.5px;height:378.8px;background:#fbfbfb;border:1px solid #e2e2e2"></div>
<div class="abs" style="left:562px;top:245px;width:40px;height:18px;background:#f1f1f1;border:1px solid #e4e4e4;border-left:none"></div>
<div class="abs" style="left:601.5px;top:245px;width:45px;height:18px;background:#f1f1f1;border:1px solid #e4e4e4"></div>
<div class="abs" style="left:510.5px;top:242.5px;width:52px;height:21px;background:#fbfbfb;border:1px solid #e2e2e2;border-bottom:none"></div>
<div class="t" style="left:516.8px;top:245.60px;font-size:12px;color:#000;transform:scaleX(0.8503);transform-origin:0 50%;">General</div>
<div class="t" style="left:567.6px;top:248.20px;font-size:12px;color:#000;transform:scaleX(0.822);transform-origin:0 50%;">View</div>
<div class="t" style="left:609.3px;top:248.20px;font-size:12px;color:#000;transform:scaleX(0.86);transform-origin:0 50%;">Search</div>
<div class="t" style="left:524.2px;top:281.20px;font-size:12px;color:#000;transform:scaleX(0.8653);transform-origin:0 50%;">Open File Explorer to:</div>
<div class="abs" style="left:525px;top:306.5px;width:329px;height:54.5px;border:1px solid #dcdcdc"></div>
<div class="abs" style="left:531.5px;top:304.5px;width:73px;height:5px;background:#fbfbfb"></div>
<div class="t" style="left:534.4px;top:300.80px;font-size:12px;color:#000;transform:scaleX(0.8568);transform-origin:0 50%;">Browse folders</div>
<div class="abs" style="left:525px;top:379.3px;width:329px;height:91.19999999999999px;border:1px solid #dcdcdc"></div>
<div class="abs" style="left:531.5px;top:377.3px;width:103.5px;height:5px;background:#fbfbfb"></div>
<div class="t" style="left:534.4px;top:373.60px;font-size:12px;color:#000;transform:scaleX(0.8639);transform-origin:0 50%;">Click items as follows</div>
<div class="abs" style="left:525px;top:488.9px;width:329px;height:107.30000000000007px;border:1px solid #dcdcdc"></div>
<div class="abs" style="left:531.5px;top:486.9px;width:38.8px;height:5px;background:#fbfbfb"></div>
<div class="t" style="left:534.4px;top:483.20px;font-size:12px;color:#000;transform:scaleX(0.8592);transform-origin:0 50%;">Privacy</div>
<svg class="abs" style="left:534.6px;top:323px;" width="33" height="25.2" viewBox="0 0 33 25.2"><rect x="0.5" y="0.5" width="32" height="24.2" fill="#fff" stroke="#6a6a6a" stroke-width="1"/><rect x="0.5" y="0.5" width="32" height="1.6" fill="#6a6a6a"/><rect x="26.5" y="1" width="1" height="1" fill="#fff"/><rect x="28.5" y="1" width="1" height="1" fill="#fff"/><rect x="30.5" y="1" width="1" height="1" fill="#fff"/></svg>
<svg class="abs" style="left:575.8px;top:317.1px;" width="13" height="13" viewBox="0 0 13 13"><circle cx="6.5" cy="6.5" r="6.5" fill="#0a5fb4"/><circle cx="6.5" cy="6.5" r="2.9" fill="#fff"/></svg>
<div class="t" style="left:592px;top:317.90px;font-size:12px;color:#000;transform:scaleX(0.87);transform-origin:0 50%;">Open each folder in the same window</div>
<svg class="abs" style="left:575.8px;top:337.9px;" width="13" height="13" viewBox="0 0 13 13"><circle cx="6.5" cy="6.5" r="6" fill="#ededed" stroke="#6e6e6e" stroke-width="1"/></svg>
<div class="t" style="left:592px;top:338.70px;font-size:12px;color:#000;transform:scaleX(0.87);transform-origin:0 50%;">Open each folder in its own window</div>
<svg class="abs" style="left:541.1px;top:394.6px;" width="22" height="31" viewBox="0 0 22 31"><defs><radialGradient id="clk" cx="0.5" cy="0.5" r="0.5"><stop offset="0" stop-color="#ee9430"/><stop offset="0.3" stop-color="#f7bc78"/><stop offset="0.6" stop-color="#fde4c0"/><stop offset="0.82" stop-color="#fdeacc"/><stop offset="0.9" stop-color="#f3b45c"/><stop offset="1" stop-color="#f3b45c"/></radialGradient></defs><path d="M0.5 0.5 H14 L19.6 6.1 V26.7 H0.5 Z" fill="#fdfdfd" stroke="#666" stroke-width="1"/><path d="M14 0.5 V6.1 H19.6" fill="#f4f4f4" stroke="#666" stroke-width="1"/><circle cx="10" cy="13.4" r="5.9" fill="url(#clk)"/><path d="M9.9 13.2 V26.4 L12.7 23.8 L14.9 28.8 L17 27.9 L14.8 23 L19.3 22.6 Z" fill="#fff" stroke="#222" stroke-width="1.05" stroke-linejoin="round"/></svg>
<svg class="abs" style="left:576.0px;top:393.0px;" width="13" height="13" viewBox="0 0 13 13"><circle cx="6.5" cy="6.5" r="6" fill="#ededed" stroke="#6e6e6e" stroke-width="1"/></svg>
<div class="t" style="left:592.3px;top:393.60px;font-size:12px;color:#000;transform:scaleX(0.8832);transform-origin:0 50%;">Single-click to open an item (point to select)</div>
<svg class="abs" style="left:595.0px;top:411.2px;" width="13" height="13" viewBox="0 0 13 13"><circle cx="6.5" cy="6.5" r="6" fill="#fbfbfb" stroke="#c6c6c6" stroke-width="1"/></svg>
<div class="t" style="left:611.6px;top:411.90px;font-size:12px;color:#8a8a8a;transform:scaleX(0.8727);transform-origin:0 50%;">Underline icon titles consistent with my browser</div>
<svg class="abs" style="left:595.0px;top:429.3px;" width="13" height="13" viewBox="0 0 13 13"><circle cx="6.5" cy="6.5" r="6.5" fill="#c2c2c2"/><circle cx="6.5" cy="6.5" r="2.9" fill="#fff"/></svg>
<div class="t" style="left:611.6px;top:430.00px;font-size:12px;color:#8a8a8a;transform:scaleX(0.8676);transform-origin:0 50%;">Underline icon titles only when I point at them</div>
<svg class="abs" style="left:576.0px;top:447.3px;" width="13" height="13" viewBox="0 0 13 13"><circle cx="6.5" cy="6.5" r="6.5" fill="#0a5fb4"/><circle cx="6.5" cy="6.5" r="2.9" fill="#fff"/></svg>
<div class="t" style="left:592.3px;top:448.20px;font-size:12px;color:#000;transform:scaleX(0.8881);transform-origin:0 50%;">Double-click to open an item (single-click to select)</div>
<svg class="abs" style="left:536px;top:498.6px;" width="31" height="33" viewBox="0 0 31 33"><circle cx="9" cy="9.4" r="8.5" fill="#f7f7f7" stroke="#c4c4c4" stroke-width="1"/><path d="M9.5 4.5 V9.4 H13.4" fill="none" stroke="#6e6e6e" stroke-width="1.1"/><path d="M13.3 4.5 H24.6 L29.8 9.7 V27.1 H13.3 Z" fill="#fff" stroke="#86807a" stroke-width="0.9"/><path d="M24.6 4.5 V9.7 H29.8" fill="#f0f0f0" stroke="#86807a" stroke-width="0.9"/><path d="M20.4 10.1 H27 M20.4 12.9 H27" stroke="#74cde6" stroke-width="1"/><path d="M20.4 16.2 H27" stroke="#1a6fc6" stroke-width="1.5"/><path d="M20.4 19.8 H27 M20.4 22.8 H27" stroke="#b9b4ae" stroke-width="1"/><path d="M15 13.3 L17 9.8 L19 13.3Z" fill="#2b88d8"/><rect x="4.2" y="13.4" width="16.7" height="17.3" fill="#0f66c2"/><circle cx="16.3" cy="19" r="1.6" fill="#fff"/><path d="M5.6 30.7 L12.5 23.3 L19.7 30.7Z" fill="#e2f0fc"/></svg>
<svg class="abs" style="left:576px;top:499.3px;" width="13" height="13" viewBox="0 0 13 13"><rect x="0.5" y="0.5" width="12" height="12" rx="2.6" fill="#f1f1f1" stroke="#6e6e6e" stroke-width="1"/></svg>
<div class="t" style="left:592.4px;top:499.90px;font-size:12px;color:#000;transform:scaleX(0.8733);transform-origin:0 50%;">Show recently used files</div>
<svg class="abs" style="left:576px;top:520.4px;" width="13" height="13" viewBox="0 0 13 13"><rect x="0" y="0" width="13" height="13" rx="3" fill="#0a5fb4"/><path d="M3.1 6.5 L5.5 8.9 L10.2 3.8" fill="none" stroke="#fff" stroke-width="1.1" stroke-linecap="round" stroke-linejoin="round"/></svg>
<div class="t" style="left:592.4px;top:521.00px;font-size:12px;color:#000;transform:scaleX(0.871);transform-origin:0 50%;">Show frequently used folders</div>
<svg class="abs" style="left:576px;top:541.5px;" width="13" height="13" viewBox="0 0 13 13"><rect x="0" y="0" width="13" height="13" rx="3" fill="#0a5fb4"/><path d="M3.1 6.5 L5.5 8.9 L10.2 3.8" fill="none" stroke="#fff" stroke-width="1.1" stroke-linecap="round" stroke-linejoin="round"/></svg>
<div class="t" style="left:592.4px;top:542.10px;font-size:12px;color:#000;transform:scaleX(0.8674);transform-origin:0 50%;">Show files from Office.com</div>
<div class="t" style="left:575.6px;top:569.00px;font-size:12px;color:#000;transform:scaleX(0.8461);transform-origin:0 50%;">Clear File Explorer history</div>
<div class="abs" style="left:776.4px;top:564.6px;width:59.80000000000007px;height:20.199999999999932px;background:#fdfdfd;border:1px solid #d0d0d0;border-radius:4px;border-bottom-color:#bdbdbd"></div>
<div class="t" style="left:793.5px;top:568.90px;font-size:12px;color:#000;transform:scaleX(0.8893);transform-origin:0 50%;">Clear</div>
<div class="abs" style="left:746.4px;top:603.5px;width:105.20000000000005px;height:20.0px;background:#fdfdfd;border:1px solid #d0d0d0;border-radius:4px;border-bottom-color:#bdbdbd"></div>
<div class="t" style="left:760.0px;top:607.70px;font-size:12px;color:#000;transform:scaleX(0.8728);transform-origin:0 50%;">Restore Defaults</div>
<div class="abs" style="left:642.4px;top:649.3px;width:72.60000000000002px;height:20.5px;background:#fdfdfd;border:1px solid #0a64bd;border-radius:4px"></div>
<div class="t" style="left:670.6px;top:653.75px;font-size:12px;color:#000;transform:scaleX(0.9343);transform-origin:0 50%;">OK</div>
<div class="abs" style="left:723.6px;top:649.3px;width:72.0px;height:20.5px;background:#fdfdfd;border:1px solid #d0d0d0;border-radius:4px;border-bottom-color:#bdbdbd"></div>
<div class="t" style="left:742.9px;top:653.75px;font-size:12px;color:#000;transform:scaleX(0.8969);transform-origin:0 50%;">Cancel</div>
<div class="abs" style="left:805px;top:649.3px;width:71.20000000000005px;height:20.5px;background:#f6f6f6;border:1px solid #e4e4e4;border-radius:4px"></div>
<div class="t" style="left:827.1px;top:653.75px;font-size:12px;color:#a3a3a3;transform:scaleX(0.8995);transform-origin:0 50%;">Apply</div>
<div class="abs" style="left:634px;top:275.2px;width:219px;height:21.2px;background:#cce4f7;border:1px solid #0b62b4;border-radius:2px"></div>
<div class="t" style="left:637.5px;top:280.00px;font-size:12px;color:#000;transform:scaleX(0.8435);transform-origin:0 50%;">Home</div>
<svg class="abs" style="left:839.6px;top:283.8px;" width="8.8" height="5.2" viewBox="0 0 8.8 5.2"><path d="M0.6 0.6 L4.4 4.4 L8.2 0.6" fill="none" stroke="#555" stroke-width="1" stroke-linecap="round" stroke-linejoin="round"/></svg>
<div class="abs" style="left:634px;top:296.4px;width:219px;height:52.8px;background:#fff;border:1px solid #5f5f5f;border-top-color:#9db8cf;box-shadow:2px 3px 5px rgba(0,0,0,.33)"></div>
<div class="abs" style="left:635px;top:310.4px;width:217px;height:12.8px;background:#0a78d4"></div>
<div class="t" style="left:636.8px;top:297.60px;font-size:12px;color:#000;transform:scaleX(0.8435);transform-origin:0 50%;">Home</div>
<div class="t" style="left:636.8px;top:310.80px;font-size:12px;color:#fff;transform:scaleX(0.8483);transform-origin:0 50%;">This PC</div>
<div class="t" style="left:636.8px;top:323.80px;font-size:12px;color:#000;transform:scaleX(0.8751);transform-origin:0 50%;">Bindhu's M34</div>
<div class="t" style="left:636.8px;top:336.90px;font-size:12px;color:#000;transform:scaleX(0.8492);transform-origin:0 50%;">Abhijith - Personal</div>
</body>
</html>
